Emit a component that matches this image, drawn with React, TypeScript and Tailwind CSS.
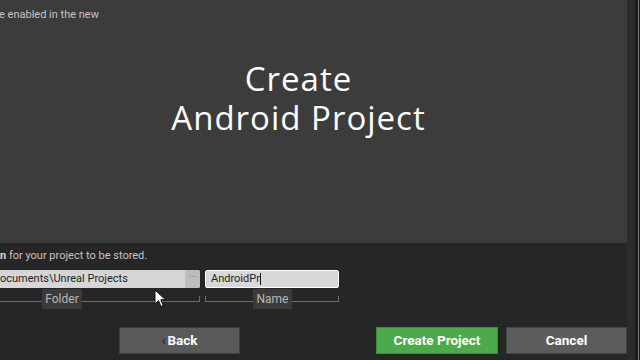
import React from "react";

const ui = { fontFamily: "Roboto, 'Liberation Sans', sans-serif" };
const title = { fontFamily: "'Open Sans', Lato, sans-serif" };

function Cursor() {
  return (
    <svg className="absolute left-[154px] top-[289px]" width="13" height="19" viewBox="0 0 13 19">
      <path d="M1 1 L1 15 L4.5 11.5 L7 17.5 L9.2 16.6 L6.8 10.8 L11.5 10.8 Z" fill="#ffffff" stroke="#111111" strokeWidth="1" strokeLinejoin="round" />
    </svg>
  );
}

export default function App() {
  return (
    <div className="relative w-[640px] h-[360px] overflow-hidden bg-[#262626] flex" style={ui}>
      <div className="w-[627px] flex flex-col">
        <div className="h-[243px] bg-[#3c3c3c] flex flex-col">
          <div className="pt-[8px] -ml-[1px] text-[11px] leading-[14px] text-[#c4c4c4]">e enabled in the new</div>
          <div className="mt-[37px] pr-[30px] text-center text-white text-[33px] leading-[39px] tracking-[1px] font-medium" style={title}>
            Create
            <br />
            Android Project
          </div>
        </div>
        <div className="pt-[6px] text-[11px] leading-[14px] text-[#c4c4c4]">
          <span className="font-bold text-[#d8d8d8]">n</span> for your project to be stored.
        </div>
        <div className="mt-[7px] flex h-[18px]">
          <div className="w-[200px] flex bg-[#d6d6d6] rounded-r-[2px] overflow-hidden">
            <div className="flex-1 text-[11px] leading-[18px] text-[#1e1e1e]">ocuments\Unreal Projects</div>
            <div className="w-[15px] bg-[#bdbdbd] text-[#777] text-[9px] leading-[14px] text-center">···</div>
          </div>
          <div className="ml-[5px] w-[134px] bg-[#d8d8d8] border border-white rounded-[2px] pl-[5px] text-[11px] leading-[16px] text-[#1e1e1e] flex items-center">
            AndroidPr<span className="inline-block w-[1px] h-[12px] bg-[#111]" />
          </div>
        </div>
        <div className="flex h-[22px]">
          <div className="relative w-[200px]">
            <div className="absolute left-0 right-0 top-[13px] h-[1px] bg-[#6a6a6a]" />
            <div className="absolute right-0 top-[8px] w-[1px] h-[6px] bg-[#6a6a6a]" />
            <div className="absolute left-[42px] top-[1px] w-[40px] h-[20px] bg-[#3a3a3a] text-[12px] leading-[20px] text-center text-[#b8b8b8]">Folder</div>
          </div>
          <div className="relative ml-[5px] w-[134px]">
            <div className="absolute left-0 right-0 top-[13px] h-[1px] bg-[#6a6a6a]" />
            <div className="absolute left-0 top-[8px] w-[1px] h-[6px] bg-[#6a6a6a]" />
            <div className="absolute right-0 top-[8px] w-[1px] h-[6px] bg-[#6a6a6a]" />
            <div className="absolute left-[48px] top-[1px] w-[39px] h-[20px] bg-[#3a3a3a] text-[12px] leading-[20px] text-center text-[#b8b8b8]">Name</div>
          </div>
        </div>
        <div className="mt-[17px] flex h-[27px]">
          <div className="ml-[119px] w-[121px] bg-[#595959] border border-[#3e3e3e] flex items-center justify-center text-white font-bold text-[13.5px]">
            <span className="text-[#2e2e2e] text-[13px] mr-[2px]">‹</span>Back
          </div>
          <div className="ml-[136px] w-[122px] bg-[#4caa4c] border border-[#3c8a3c] flex items-center justify-center text-white font-bold text-[13.5px]">
            Create Project
          </div>
          <div className="ml-[8px] w-[121px] bg-[#5c5c5c] border border-[#444] flex items-center justify-center text-white font-bold text-[13.5px]">
            Cancel
          </div>
        </div>
      </div>
      <div className="w-[13px] flex">
        <div className="w-[8px] bg-[#2c2c2c]" />
        <div className="w-[3px] bg-[#1c1c1c]" />
        <div className="w-[1px] bg-[#7a7a7a]" />
        <div className="w-[1px] bg-[#1c1c1c]" />
      </div>
      <Cursor />
    </div>
  );
}
